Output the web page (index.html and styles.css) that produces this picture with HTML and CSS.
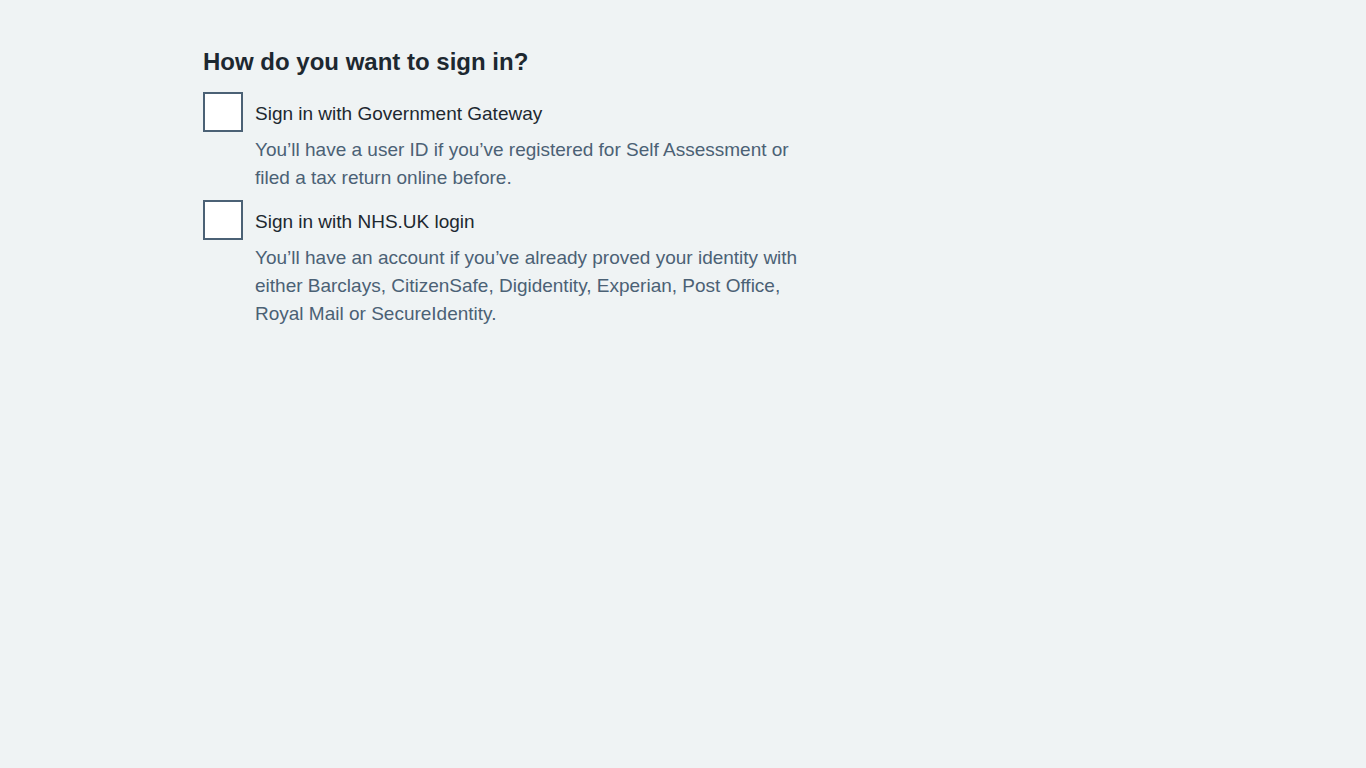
FILE: index.html
```html
<!DOCTYPE html>
<html lang="en">
<head>
<meta charset="utf-8">
<title>How do you want to sign in?</title>
<link rel="stylesheet" href="styles.css">
</head>
<body>
<main class="page">
  <h1 class="title">How do you want to sign in?</h1>
  <div class="options">
    <label class="option">
      <span class="box"></span>
      <span class="label">Sign in with Government Gateway</span>
      <span class="hint">You’ll have a user ID if you’ve registered for Self Assessment or filed a tax return online before.</span>
    </label>
    <label class="option">
      <span class="box"></span>
      <span class="label">Sign in with NHS.UK login</span>
      <span class="hint">You’ll have an account if you’ve already proved your identity with either Barclays, CitizenSafe, Digidentity, Experian, Post Office, Royal Mail or SecureIdentity.</span>
    </label>
  </div>
</main>
</body>
</html>
```

FILE: styles.css
```css
html, body {
  margin: 0;
  padding: 0;
  background: #eff3f4;
  font-family: "Liberation Sans", Arial, sans-serif;
}
.page {
  padding: 47px 0 0 203px;
  width: 600px;
}
.title {
  margin: 0 0 15px;
  font-size: 24px;
  line-height: 30px;
  font-weight: 700;
  color: #1d2830;
}
.options {
  display: flex;
  flex-direction: column;
  gap: 8px;
}
.option {
  display: grid;
  grid-template-columns: 40px 1fr;
  column-gap: 12px;
  align-items: start;
}
.box {
  width: 40px;
  height: 40px;
  box-sizing: border-box;
  border: 2px solid #4b6175;
  background: #ffffff;
}
.label {
  padding-top: 1px;
  font-size: 19px;
  line-height: 42px;
  color: #1d2830;
}
.hint {
  grid-column: 2;
  margin-top: 1px;
  font-size: 19px;
  line-height: 28px;
  color: #4b6175;
}
```
